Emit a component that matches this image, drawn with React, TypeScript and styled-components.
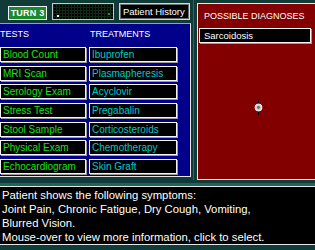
import React from "react";
import styled, { createGlobalStyle } from "styled-components";

const Global = createGlobalStyle`
  html, body { margin: 0; padding: 0; background: #0f3b39; }
  #root { width: 315px; height: 250px; }
`;

const Screen = styled.div`
  width: 315px;
  height: 250px;
  background: #0f3b39;
  font-family: "Liberation Sans", Arial, sans-serif;
  position: relative;
  overflow: hidden;
  display: grid;
  grid-template-columns: 191px 1fr;
  grid-template-rows: 180px 1fr;
`;

const LeftCol = styled.div`
  display: flex;
  flex-direction: column;
`;

const TopBar = styled.div`
  height: 23px;
  display: flex;
  align-items: flex-start;
  padding-top: 3px;
  box-sizing: border-box;
`;

const TurnBadge = styled.div`
  margin: 3px 0 0 8px;
  width: 39px;
  height: 14px;
  box-sizing: border-box;
  background: #1b8a2c;
  border: 1px solid #f2f2f2;
  color: #fff;
  font-weight: bold;
  font-size: 9px;
  line-height: 12px;
  text-align: center;
  letter-spacing: 0.2px;
`;

const Monitor = styled.div`
  margin-left: 5px;
  width: 62px;
  height: 17px;
  box-sizing: border-box;
  border: 1px solid #c8c8c8;
  background-color: #000;
  background-image:
    linear-gradient(to right, #0c2a14 1px, transparent 1px),
    linear-gradient(to bottom, #0c2a14 1px, transparent 1px);
  background-size: 3px 3px;
  position: relative;
`;

const Blip = styled.div<{ $x: number; $y: number; $c: string }>`
  position: absolute;
  left: ${(p) => p.$x}px;
  top: ${(p) => p.$y}px;
  width: 2px;
  height: 2px;
  background: ${(p) => p.$c};
`;

const HistoryButton = styled.div`
  margin-left: 5px;
  width: 71px;
  height: 17px;
  box-sizing: border-box;
  border: 1px solid #d8d8d8;
  box-shadow: inset 0 0 0 1px #6a6a6a;
  background: #000;
  color: #fff;
  font-size: 9.5px;
  line-height: 15px;
  padding-left: 3px;
  white-space: nowrap;
`;

const BluePanel = styled.div`
  flex: 1;
  background: #00008a;
  border-top: 1px solid #8f9fd0;
  border-right: 1px solid #e6e6e6;
  border-bottom: 1px solid #e6e6e6;
  margin-bottom: 3px;
  display: grid;
  grid-template-columns: 86px 88px;
  column-gap: 3px;
  align-content: start;
`;

const ColHead = styled.div<{ $pl: number }>`
  color: #fff;
  font-size: 9px;
  height: 23px;
  line-height: 14px;
  padding-top: 3px;
  box-sizing: border-box;
  padding-left: ${(p) => p.$pl}px;
`;

const List = styled.div`
  display: flex;
  flex-direction: column;
  gap: 3.67px;
`;

const Item = styled.div<{ $color: string }>`
  height: 15px;
  box-sizing: border-box;
  background: #000;
  border: 1px solid #f4f4f4;
  box-shadow: 1px 1px 0 #9a9a9a;
  color: ${(p) => p.$color};
  font-size: 10px;
  line-height: 13px;
  padding-left: 2px;
  white-space: nowrap;
  overflow: hidden;
`;

const RightCol = styled.div`
  padding: 3px 0 0 3px;
  display: flex;
  border-left: 1px solid #2c6662;
  margin-left: 2px;
`;

const RedPanel = styled.div`
  flex: 1;
  height: 177px;
  box-sizing: border-box;
  background: #820000;
  border: 1px solid #eaeaea;
  border-right: none;
  position: relative;
  padding: 6px 0 0 1px;
`;

const RedTitle = styled.div`
  color: #fff;
  font-size: 9px;
  line-height: 12px;
  padding-left: 5px;
`;

const Diagnosis = styled.div`
  margin-top: 6px;
  width: 112px;
  height: 15px;
  box-sizing: border-box;
  background: #000;
  border: 1px solid #f4f4f4;
  box-shadow: 1px 1px 0 #9a9a9a;
  color: #fff;
  font-size: 9.5px;
  line-height: 13px;
  padding-left: 4px;
`;

const Cursor = styled.svg`
  position: absolute;
  left: 53px;
  top: 96px;
`;

const Footer = styled.div`
  grid-column: 1 / span 2;
  margin-top: 6px;
  height: 59px;
  box-sizing: border-box;
  background: #000;
  border-top: 1px solid #e6e6e6;
  border-bottom: 1px solid #e6e6e6;
  box-shadow: 0 -3px 0 #24605c;
  color: #fff;
  font-size: 11.3px;
  line-height: 14px;
  padding: 1px 0 0 2px;
`;

const tests = [
  "Blood Count",
  "MRI Scan",
  "Serology Exam",
  "Stress Test",
  "Stool Sample",
  "Physical Exam",
  "Echocardiogram",
];

const treatments = [
  "Ibuprofen",
  "Plasmapheresis",
  "Acyclovir",
  "Pregabalin",
  "Corticosteroids",
  "Chemotherapy",
  "Skin Graft",
];

export default function App() {
  return (
    <>
      <Global />
      <Screen>
        <LeftCol>
          <TopBar>
            <TurnBadge>TURN 3</TurnBadge>
            <Monitor>
              <Blip $x={4} $y={11} $c="#e8e8e8" />
              <Blip $x={55} $y={9} $c="#2c8a3a" />
            </Monitor>
            <HistoryButton>Patient History</HistoryButton>
          </TopBar>
          <BluePanel>
            <ColHead $pl={0}>TESTS</ColHead>
            <ColHead $pl={1}>TREATMENTS</ColHead>
            <List>
              {tests.map((t) => (
                <Item key={t} $color="#19e019">
                  {t}
                </Item>
              ))}
            </List>
            <List>
              {treatments.map((t) => (
                <Item key={t} $color="#00c8c8">
                  {t}
                </Item>
              ))}
            </List>
          </BluePanel>
        </LeftCol>
        <RightCol>
          <RedPanel>
            <RedTitle>POSSIBLE DIAGNOSES</RedTitle>
            <Diagnosis>Sarcoidosis</Diagnosis>
            <Cursor width="15" height="15" viewBox="0 0 15 15">
              <line x1="7.5" y1="0" x2="7.5" y2="15" stroke="#000" strokeWidth="1" />
              <line x1="0" y1="7.5" x2="15" y2="7.5" stroke="#000" strokeWidth="1" />
              <circle cx="7.5" cy="7.5" r="3.5" fill="#d0d0d0" stroke="#f4f4f4" strokeWidth="1" />
              <circle cx="7.5" cy="7.5" r="1.4" fill="#6a6a6a" />
            </Cursor>
          </RedPanel>
        </RightCol>
        <Footer>
          Patient shows the following symptoms:
          <br />
          Joint Pain, Chronic Fatigue, Dry Cough, Vomiting,
          <br />
          Blurred Vision.
          <br />
          Mouse-over to view more information, click to select.
        </Footer>
      </Screen>
    </>
  );
}
